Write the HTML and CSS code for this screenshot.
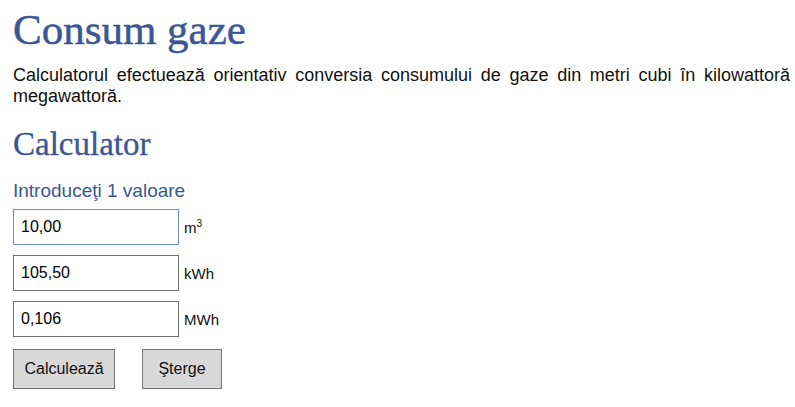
FILE: index.html
```html
<!DOCTYPE html>
<html lang="ro">
<head>
<meta charset="utf-8">
<title>Consum gaze</title>
<link rel="stylesheet" href="styles.css">
</head>
<body>
<h1 class="title">Consum gaze</h1>
<p class="intro">Calculatorul efectuează orientativ conversia consumului de gaze din metri cubi în kilowattoră megawattoră.</p>
<h2 class="subtitle">Calculator</h2>
<div class="hint">Introduceţi 1 valoare</div>
<form class="calc">
  <div class="row"><input class="field focused" type="text" value="10,00"><span class="unit">m<sup>3</sup></span></div>
  <div class="row"><input class="field" type="text" value="105,50"><span class="unit">kWh</span></div>
  <div class="row"><input class="field" type="text" value="0,106"><span class="unit">MWh</span></div>
  <div class="buttons">
    <button type="button" class="btn btn-calc">Calculează</button>
    <button type="button" class="btn btn-clear">Şterge</button>
  </div>
</form>
</body>
</html>
```

FILE: styles.css
```css
html, body {
  margin: 0;
  background: #fff;
}
body {
  padding: 5px 5px 0 13px;
  font-family: "Liberation Sans", Arial, sans-serif;
  color: #111;
}
.title {
  margin: 0;
  font-family: "Liberation Serif", "Times New Roman", serif;
  font-weight: normal;
  font-size: 43px;
  line-height: 50px;
  color: #3a5795;
  -webkit-text-stroke: 0.5px #3a5795;
}
.intro {
  margin: 10px 0 0 0;
  font-size: 18px;
  line-height: 21px;
  text-align: justify;
}
.subtitle {
  margin: 17px 0 0 0;
  font-family: "Liberation Serif", "Times New Roman", serif;
  font-weight: normal;
  font-size: 33px;
  line-height: 40px;
  color: #3a5795;
  -webkit-text-stroke: 0.3px #3a5795;
}
.hint {
  margin-top: 16px;
  font-size: 19px;
  line-height: 22px;
  color: #3a5795;
}
.calc {
  margin-top: 7px;
  display: flex;
  flex-direction: column;
  gap: 10px;
}
.row {
  display: flex;
  align-items: center;
}
.field {
  box-sizing: border-box;
  width: 166px;
  height: 36px;
  margin: 0;
  padding: 0 7px;
  border: 1px solid #767676;
  font-family: "Liberation Sans", Arial, sans-serif;
  font-size: 16px;
  color: #000;
  outline: none;
}
.field.focused {
  border-color: #6f8fc4;
}
.unit {
  margin-left: 5px;
  font-size: 15px;
  color: #111;
}
.unit sup {
  font-size: 10px;
  line-height: 0;
}
.buttons {
  margin-top: 2px;
  display: flex;
  gap: 27px;
}
.btn {
  box-sizing: border-box;
  height: 40px;
  margin: 0;
  padding: 0;
  border: 1px solid #767676;
  background: #d8d8d8;
  font-family: "Liberation Sans", Arial, sans-serif;
  font-size: 16px;
  color: #111;
}
.btn-calc { width: 102px; }
.btn-clear { width: 80px; }
```
